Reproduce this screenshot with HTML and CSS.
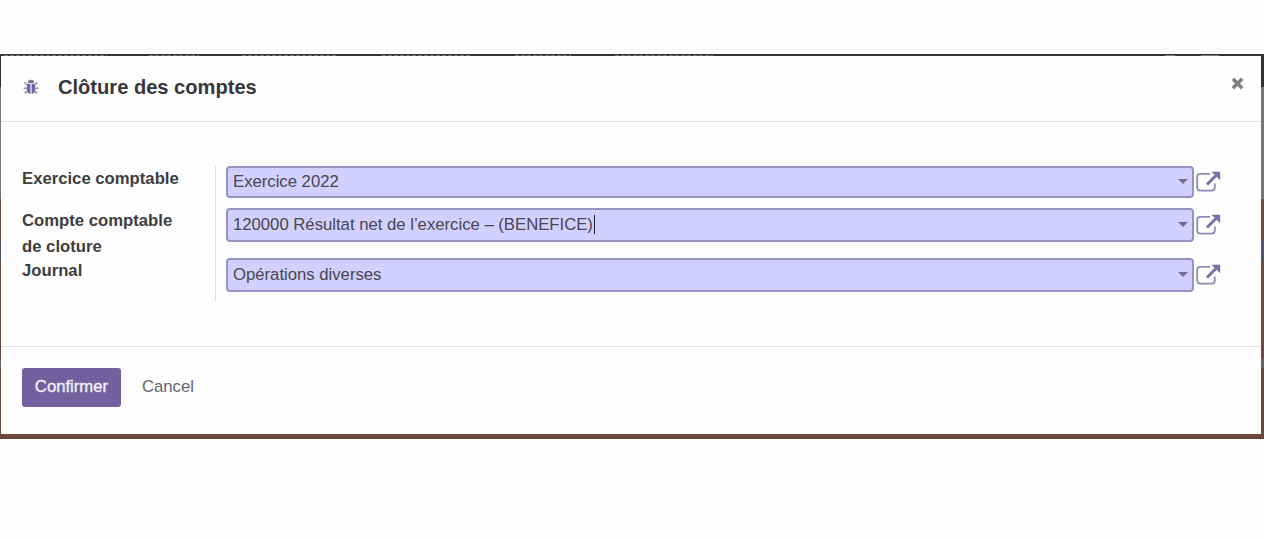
FILE: index.html
```html
<!DOCTYPE html>
<html lang="fr">
<head>
<meta charset="utf-8">
<title>Clôture des comptes</title>
<link rel="stylesheet" href="styles.css">
</head>
<body>
<svg width="0" height="0" class="defs">
  <symbol id="external" viewBox="0 0 25 21">
    <path d="M14 2.8H4.2Q1.2 2.8 1.2 5.8V16.6Q1.2 19.6 4.2 19.6H15.8Q18.8 19.6 18.8 16.6V12.5" fill="none" stroke="#9189b8" stroke-width="1.8"/>
    <path d="M11 13.5 20 4.5" fill="none" stroke="#7c70a8" stroke-width="3"/>
    <path d="M15.5 .7H24.2V9.2Z" fill="#7c70a8"/>
  </symbol>
</svg>
<div class="backdrop">
  <main class="dialog">
    <header class="header">
      <svg class="bug" viewBox="0 0 16 16">
        <path d="M4.8 4.2a3.2 3.4 0 0 1 6.4 0Z" fill="#77738f"/>
        <path d="M3.8 5H7.4V15Q3.8 14 3.8 10.4ZM8.6 5H12.2V10.4Q12.2 14 8.6 15Z" fill="#6f62a2"/>
        <path d="M1.6 3.4 4.6 6M14.4 3.4 11.4 6M.6 9.2H4.5M11.5 9.2H15.4M1.8 14.4 5 11.6M14.2 14.4 11 11.6" stroke="#8d89a0" stroke-width="1.4"/>
      </svg>
      <h1 class="title">Clôture des comptes</h1>
      <svg class="close" viewBox="0 0 12 12"><path d="M1.7 1.7 10.3 10.3M10.3 1.7 1.7 10.3" stroke="#808080" stroke-width="3.2"/></svg>
    </header>
    <section class="body">
      <div class="labels">
        <div class="label">Exercice comptable</div>
        <div class="label label-tall">Compte comptable<br>de cloture</div>
        <div class="label">Journal</div>
      </div>
      <div class="fields">
        <div class="row"><div class="input">Exercice 2022<i class="caret"></i></div><svg class="external"><use href="#external"/></svg></div>
        <div class="row row-account"><div class="input">120000 Résultat net de l’exercice – (BENEFICE)<b class="cursor"></b><i class="caret"></i></div><svg class="external"><use href="#external"/></svg></div>
        <div class="row row-journal"><div class="input">Opérations diverses<i class="caret"></i></div><svg class="external"><use href="#external"/></svg></div>
      </div>
    </section>
    <footer class="footer">
      <button class="confirm">Confirmer</button>
      <button class="cancel">Cancel</button>
    </footer>
  </main>
</div>
</body>
</html>
```
FILE: styles.css
```css
* { box-sizing: border-box; }
body {
  margin: 0;
  padding-top: 54px;
  height: 539px;
  overflow: hidden;
  background: #fdfdfd;
  color: #3d3d42;
  font: 16.7px/25px "Liberation Sans", Arial, sans-serif;
}
.defs { display: block; }
/* Dimmed page visible round the dialog; the dashes are its clipped menu labels. */
.backdrop {
  height: 385px;
  padding: 2px 3px 5px 1px;
  background:
    repeating-linear-gradient(90deg, #77777f 0 4px, transparent 4px 6px) 4px 1px / 103px 1px no-repeat,
    repeating-linear-gradient(90deg, #77777f 0 4px, transparent 4px 6px) 149px 1px / 50px 1px no-repeat,
    repeating-linear-gradient(90deg, #77777f 0 4px, transparent 4px 6px) 242px 1px / 94px 1px no-repeat,
    repeating-linear-gradient(90deg, #77777f 0 4px, transparent 4px 6px) 382px 1px / 88px 1px no-repeat,
    repeating-linear-gradient(90deg, #77777f 0 4px, transparent 4px 6px) 515px 1px / 56px 1px no-repeat,
    repeating-linear-gradient(90deg, #77777f 0 4px, transparent 4px 6px) 615px 1px / 98px 1px no-repeat,
    linear-gradient(#77777f, #77777f) 1165px 1px / 10px 1px no-repeat,
    linear-gradient(#77777f, #77777f) 1201px 1px / 18px 1px no-repeat,
    linear-gradient(#34343c, #34343c) 0 0 / 100% 2px no-repeat,
    linear-gradient(#30323e 0 33px, #777 33px 145px, #6e493f 145px 186px, #50556b 186px 207px, #6e493f 207px 304px, #6b6264 304px 314px, #6a473d 314px);
}
.dialog { height: 378px; background: #fefefe; }
.header {
  display: flex;
  align-items: center;
  height: 66px;
  padding: 0 17px 3px 22px;
  border-bottom: 1px solid #e0e3e8;
}
.bug { width: 16px; height: 16px; }
.title {
  flex: 1;
  margin: 0 0 0 19px;
  padding-bottom: 1px;
  color: #36363b;
  font-size: 20.1px;
  line-height: 28px;
}
.close { width: 13px; height: 13px; margin-bottom: 7px; }
.body {
  display: flex;
  height: 225px;
  padding: 44px 40px 0 21px;
  border-bottom: 1px solid #e2e2e6;
}
.labels {
  width: 194px;
  height: 136px;
  border-right: 1px solid #dedee0;
  font-weight: bold;
}
.label { height: 42px; }
.label-tall { height: 50px; line-height: 26px; }
.fields { flex: 1; padding-left: 10px; }
.row { display: flex; align-items: center; gap: 2px; height: 32px; }
.row-account { height: 34px; margin-top: 10px; }
.row-journal { height: 34px; margin-top: 16px; }
.input {
  display: flex;
  flex: 1;
  align-items: center;
  height: 100%;
  padding: 0 4px 2px 5px;
  border: 2px solid #9791c4;
  border-radius: 4px;
  background: #d2d0fe;
  color: #49474f;
}
.cursor { width: 1px; height: 19px; margin-left: 1px; background: #222; }
.caret {
  margin: 1px 0 0 auto;
  border: solid transparent;
  border-width: 5px 5px 0;
  border-top-color: #7568a0;
}
.external { width: 25px; height: 21px; margin-bottom: 2px; }
.footer { display: flex; padding: 21px; }
button { height: 39px; padding: 0 0 2px; border: 0; font: inherit; }
.confirm {
  width: 99px;
  border-radius: 3px;
  background: #71619f;
  color: #f3f0fa;
  -webkit-text-stroke: .35px #f3f0fa;
}
.cancel { margin-left: 21px; background: none; color: #66646e; }
```
